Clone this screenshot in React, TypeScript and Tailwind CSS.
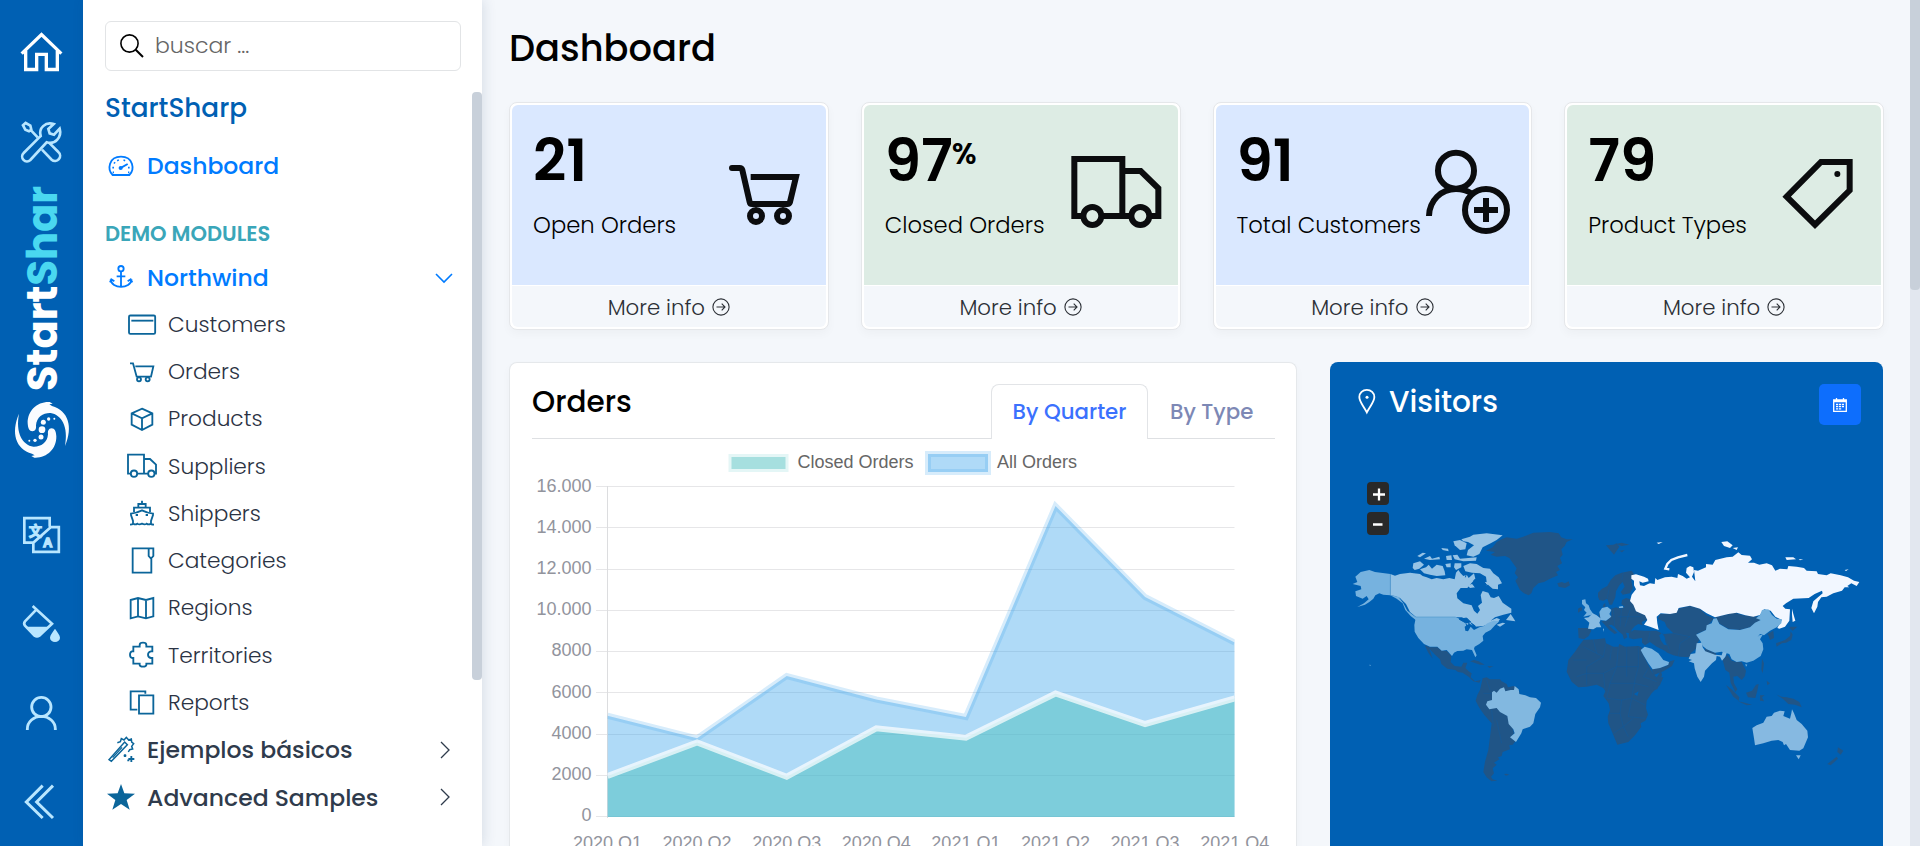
import type { ReactNode } from "react";

const NAV_SUB: { label: string; icon: ReactNode; box: string }[] = [
  {
    label: "Customers",
    box: "378 85 99 96",
    icon: (
      <>
        <rect x="387" y="104.5" width="78.5" height="55" rx="4" />
        <path d="M394 120H460" />
      </>
    ),
  },
  {
    label: "Orders",
    box: "378 227 99 96",
    icon: (
      <>
        <path d="M390 249H399L410 289H453L460 258H406" />
        <circle cx="417" cy="297" r="6" />
        <circle cx="443" cy="297" r="6" />
      </>
    ),
  },
  {
    label: "Products",
    box: "378 369 99 96",
    icon: <path d="M426 386L457 400V434L426 450L395 434V400ZM395 400L426 415L457 400M426 415V450" />,
  },
  {
    label: "Suppliers",
    box: "378 511 99 96",
    icon: (
      <>
        <path d="M393 582H384V525H432V582H412M432 582H444M432 538H450L468 555V582H463" />
        <circle cx="402" cy="582" r="9.5" />
        <circle cx="454" cy="582" r="9.5" />
      </>
    ),
  },
  {
    label: "Shippers",
    box: "378 652 99 96",
    icon: (
      <>
        <path d="M426 660V669M415 681V670H437V681M402 694V681H450V694M399 731V721L393 703V699Q410 697 426 689Q442 697 459 699V703L453 721V731M390 732Q397 732 400 729Q406 733 412 729Q418 733 426 729Q434 733 440 729Q446 733 452 729Q456 732 462 732" />
        <path d="M407 703h7M437 703h7" />
      </>
    ),
  },
  {
    label: "Categories",
    box: "378 794 99 96",
    icon: <path d="M454 836V877H398V804H460V827L453 835L446 827V804" />,
  },
  {
    label: "Regions",
    box: "378 96 99 96",
    icon: <path d="M392 120L414 114L438 120L460 114V169L438 175L414 169L392 175ZM414 114V169M438 120V175" />,
  },
  {
    label: "Territories",
    box: "378 238 99 96",
    icon: (
      <path d="M400 261H419V256Q419 249 429 249Q439 249 439 256V261H457V275H453Q444 277 444 285Q444 293 453 295H457V312H439V316Q438 321 429 321Q420 321 419 316V312H400V295H396Q390 293 390 285Q390 277 396 275H400Z" />
    ),
  },
  {
    label: "Reports",
    box: "378 379 99 96",
    icon: <path d="M412 447H392V392H436V399M417 404H460V459H417Z" />,
  },
];

function MenuIcon({ box, children, className }: { box: string; children: ReactNode; className: string }) {
  return (
    <svg viewBox={box} className={className} fill="none" stroke="currentColor" strokeWidth="5.500">
      {children}
    </svg>
  );
}

const SWIRL =
  "M158 371L149 366C112 364 82 392 83 430C84 446 88 454 97 454C107 453 109 446 108 436C110 410 130 398 152 399C184 404 206 440 195 498C220 440 205 392 156 378L148 373Z";

function Rail() {
  return (
    <nav className="flex w-[83px] shrink-0 flex-col bg-[#0060b3] text-[#b8e6ff]">
      <svg viewBox="0 0 249 300" className="h-[100px] w-[83px] text-white" fill="none" stroke="currentColor" strokeWidth="10">
        <path d="M65 161L124.500 104L184 161M77 152V208.500H110V163H139V208.500H172V152" />
      </svg>
      <svg viewBox="0 300 249 255" className="h-[85px] w-[83px]" fill="none" stroke="currentColor" strokeWidth="8">
        <path d="M117 413L71 459A14.500 14.500 0 0 0 91 480L140 427C166 435 186 411 179 386L162 404L149 400L145 387L161 372C136 364 115 385 122 408Z" />
        <path d="M69 376L77 369L91 377L94 389L87 394L76 389ZM91 389L113 412M147 428L175 456A14.500 14.500 0 0 1 155 479L126 449" />
      </svg>
      <svg viewBox="0 185 83 206" className="h-[206px] w-[83px]">
        <text transform="translate(57 391) rotate(-90)" className="fill-white font-['Poppins','Inter',sans-serif] text-[41.600px] font-bold">
          Start<tspan fill="#4ad8f0">Shar</tspan>
        </text>
      </svg>
      <svg viewBox="0 333 249 237" className="h-[79px] w-[83px]" fill="#fafcff">
        <path d={SWIRL} />
        <path transform="rotate(180 126 449.500)" d={SWIRL} />
        <circle cx="126" cy="449" r="10" />
        <circle cx="130" cy="427" r="7.500" />
        <circle cx="146" cy="417" r="5" />
        <circle cx="163" cy="416" r="3" />
        <circle cx="123" cy="471" r="7.500" />
        <circle cx="105" cy="481" r="5" />
        <circle cx="88" cy="482" r="3" />
      </svg>
      <svg viewBox="0 570 249 330" className="h-[110px] w-[83px]" fill="none" stroke="currentColor" strokeWidth="8">
        <path d="M98 788H73V714.500H149V740M149 741.500H176.500V815.500H100V788L152 741.500" />
        <text x="86" y="768" fill="currentColor" strokeWidth="3" className="font-['Noto_Sans_CJK_SC',sans-serif] text-[40px] font-bold">文</text>
        <text x="129" y="801" fill="currentColor" strokeWidth="4" className="font-['Liberation_Sans',sans-serif] text-[39px] font-bold">A</text>
      </svg>
      <svg viewBox="0 60 249 270" className="h-[90px] w-[83px]" fill="none" stroke="currentColor" strokeWidth="8">
        <path d="M98 138L156 191L118 227Q111 232 104 227L75 197Q70 190 75 184L109 149" />
        <path fill="currentColor" stroke="none" d="M76 200H146L118 229Q111 234 104 229ZM165 206C172 217 180 225 180 233A15 13 0 0 1 150 233C150 225 158 217 165 206Z" />
      </svg>
      <svg viewBox="0 330 249 270" className="h-[90px] w-[83px]" fill="none" stroke="currentColor" strokeWidth="8.500">
        <circle cx="124" cy="441" r="29" />
        <path d="M82 510V507A42 38 0 0 1 166 507V510" />
      </svg>
      <svg viewBox="0 600 249 258" className="h-[86px] w-[83px]" fill="none" stroke="currentColor" strokeWidth="9">
        <path d="M128 677L79 726L128 774M159 677L110 726L159 774" />
      </svg>
    </nav>
  );
}

function Sidebar() {
  return (
    <aside className="relative z-10 flex w-[399px] shrink-0 flex-col bg-white text-[#2f3b4c] shadow-[2px_0_12px_rgba(30,60,100,0.13)]">
      <div className="ml-[22px] mt-[21px] flex h-[50px] w-[356px] shrink-0 items-center rounded-md border border-[#e2e4e6] pl-[14px]">
        <svg viewBox="0 0 24 24" className="size-6 text-black" fill="none" stroke="currentColor" strokeWidth="1.600">
          <circle cx="9.500" cy="9.500" r="8.600" />
          <path d="M15.700 15.700L23 23" strokeWidth="2" />
        </svg>
        <span className="ml-[11px] text-[22px] font-light leading-[48px] text-[#666]">buscar ...</span>
      </div>
      <div className="mt-[21px] flex min-h-0 flex-1">
        <div className="flex-1 pl-[22px]">
          <div className="h-[33px] text-[26.300px] font-medium leading-[32px] text-[#0060b3]">StartSharp</div>
          <div className="mt-[17px] flex h-[47px] items-center text-[23.500px] font-medium text-[#007bff]">
            <MenuIcon box="315 432 108 132" className="h-11 w-9">
              <path d="M338 525H388C405 508 400 470 363 470C326 470 321 508 338 525Z" />
              <path strokeWidth="6" d="M360 505L383 492" />
              <circle cx="362" cy="504" r="3.500" />
              <path d="M337 503h5M384 517h4M338 517h4M342 487l3 3M353 479l2 4M372 483l2-4M384 503h5" />
            </MenuIcon>
            <span className="ml-[6px]">Dashboard</span>
          </div>
          <div className="mt-[30px] h-[30px] text-[21px] font-semibold leading-[30px] text-[#3aa6b9]">DEMO MODULES</div>
          <div className="mt-[5px] flex h-[47px] items-center text-[23.500px] font-medium text-[#007bff]">
            <MenuIcon box="315 768 108 132" className="h-11 w-9">
              <circle cx="363" cy="806" r="8" />
              <path d="M363 814V858M350 829H376M332 838C334 868 392 868 395 838M330 847L334 838L343 844M383 844L392 838L397 847" />
            </MenuIcon>
            <span className="ml-[6px]">Northwind</span>
            <svg viewBox="0 0 20 20" className="ml-auto mr-[18px] size-5" fill="none" stroke="currentColor" strokeWidth="1.600">
              <path d="M2 6L10 14L18 6" />
            </svg>
          </div>
          {NAV_SUB.map((n) => (
            <div key={n.label} className="flex h-[47.250px] items-center pl-[21px] text-[21.700px] font-light">
              <MenuIcon box={n.box} className="h-8 w-[33px] text-[#0b659a]">
                {n.icon}
              </MenuIcon>
              <span className="ml-[9px] mt-px text-[#2b3344]">{n.label}</span>
            </div>
          ))}
          <div className="flex h-[47.250px] items-center text-[23.500px] font-medium">
            <MenuIcon box="315 504 108 132" className="h-11 w-9 text-[#0b659a]">
              <path strokeWidth="4.500" d="M327 599L374 546L382 554L334 604ZM352 548L361 545L364 536L372 540L379 532L386 540L394 537L395 546L401 551L395 559L398 567L389 569L385 576" />
              <path strokeWidth="4" d="M338 593L366 562" />
              <path d="M394 588V606M385 597H403M371 587H379M375 583V591M382 601H388" />
            </MenuIcon>
            <span className="ml-[6px]">Ejemplos básicos</span>
            <svg viewBox="0 0 20 20" className="ml-auto mr-[17px] size-5" fill="none" stroke="currentColor" strokeWidth="1.300">
              <path d="M6 2L14 10L6 18" />
            </svg>
          </div>
          <div className="flex h-[47.250px] items-center text-[23.500px] font-medium">
            <MenuIcon box="315 645 108 132" className="h-11 w-9 text-[#0b659a]">
              <path fill="currentColor" stroke="none" d="M363 672L373 700L405 701L380 720L389 749L363 732L337 749L346 720L321 701L353 700Z" />
            </MenuIcon>
            <span className="ml-[6px]">Advanced Samples</span>
            <svg viewBox="0 0 20 20" className="ml-auto mr-[17px] size-5" fill="none" stroke="currentColor" strokeWidth="1.300">
              <path d="M6 2L14 10L6 18" />
            </svg>
          </div>
        </div>
        <div className="h-[588px] w-[10px] rounded-[4px] bg-[#c8d0da]" />
      </div>
    </aside>
  );
}

const STATS: { value: string; unit?: string; label: string; tone: string; box: string; icon: ReactNode }[] = [
  {
    value: "21",
    label: "Open Orders",
    tone: "bg-[#dae8ff]",
    box: "684 315 324 540",
    icon: (
      <>
        <path d="M782 531H918L900 606Q898 612 892 612H786Q780 612 779 606L757 510Q755 504 749 504H726" />
        <circle cx="726" cy="504" r="9" fill="currentColor" stroke="none" />
        <circle cx="798" cy="648" r="18" />
        <circle cx="879" cy="648" r="18" />
      </>
    ),
  },
  {
    value: "97",
    unit: "%",
    label: "Closed Orders",
    tone: "bg-[#ddece4]",
    box: "330 75 324 540",
    icon: (
      <>
        <path d="M370 408H343V237H487V408H424M487 408H514M487 273H542L595 325V408H569" />
        <circle cx="397" cy="408" r="27" />
        <circle cx="541" cy="408" r="27" />
      </>
    ),
  },
  {
    value: "91",
    label: "Total Customers",
    tone: "bg-[#dae8ff]",
    box: "-27 75 324 540",
    icon: (
      <>
        <circle cx="78" cy="272" r="54" />
        <path d="M-3 408C-2 362 33 327 78 327C96 327 112 332 126 341" />
        <circle cx="168" cy="390" r="63" />
        <path d="M168 354V426M132 390H204" />
      </>
    ),
  },
  {
    value: "79",
    label: "Product Types",
    tone: "bg-[#ddece4]",
    box: "1029 75 324 540",
    icon: (
      <>
        <path d="M1070 350L1173 246H1259V331L1155 434Z" />
        <circle cx="1222" cy="282" r="9" fill="currentColor" stroke="none" />
      </>
    ),
  },
];

function StatCards() {
  return (
    <div className="grid grid-cols-4 gap-8">
      {STATS.map((s) => (
        <div key={s.label} className="flex h-[228px] flex-col rounded-lg border border-[#e5e7ea] bg-white p-[2px] shadow-[0_4px_10px_rgba(0,0,0,0.03)]">
          <div className={`flex h-[180px] rounded-t-md ${s.tone}`}>
            <div className="w-[204px] shrink-0 pl-[21px] pt-[27px] text-black">
              <div className="flex h-[58px] items-start text-[58px] font-semibold leading-[58px]">
                {s.value}
                {s.unit && <span className="-ml-px mt-[4px] text-[30px] font-semibold leading-[36px]">{s.unit}</span>}
              </div>
              <div className="mt-[18px] whitespace-nowrap text-[22.700px] font-light leading-[34px]">{s.label}</div>
            </div>
            <svg viewBox={s.box} className="ml-auto h-[180px] w-[108px] shrink-0 text-[#0b0c0e]" fill="none" stroke="currentColor" strokeWidth="18">
              {s.icon}
            </svg>
          </div>
          <div className="mt-px flex flex-1 items-center justify-center rounded-b-md bg-[#f4f7fb] text-[21.300px] font-light text-[#2c3036]">
            <span className="mt-[2px]">More info</span>
            <svg viewBox="0 0 18 18" className="ml-[7px] mt-px size-[18px]" fill="none" stroke="currentColor" strokeWidth="1.100">
              <circle cx="9" cy="9" r="8.100" />
              <path d="M4.500 9H13M9.700 5.700L13 9L9.700 12.300" />
            </svg>
          </div>
        </div>
      ))}
    </div>
  );
}

const X0 = 607.5;
const STEP = 89.6;
const ALL = [715.7, 738.3, 676, 699.5, 717, 506, 597, 642.6];
const CLOSED = [776, 742.5, 776.7, 728.3, 737.7, 693.5, 724, 698.5];
const line = (v: number[]) => v.map((y, i) => `${X0 + i * STEP},${y}`).join(" ");
const area = (v: number[]) => `${line(v)} ${X0 + 7 * STEP},817 ${X0},817`;
const Y_LABELS = ["16.000", "14.000", "12.000", "10.000", "8000", "6000", "4000", "2000", "0"];
const X_LABELS = ["2020 Q1", "2020 Q2", "2020 Q3", "2020 Q4", "2021 Q1", "2021 Q2", "2021 Q3", "2021 Q4"];

function OrdersCard() {
  return (
    <section className="w-[788px] shrink-0 rounded-t-lg border border-b-0 border-[#e5e8eb] bg-white pl-[22px] pr-[21px] shadow-[0_4px_10px_rgba(0,0,0,0.03)]">
      <div className="flex h-[76px] items-end border-b border-[#dee0e3]">
        <h2 className="mb-[18px] text-[29.500px] font-medium leading-[36px] text-black">Orders</h2>
        <div className="-mb-px ml-auto flex h-[55px] w-[157px] items-center justify-center rounded-t-lg border border-b-0 border-[#e2e4e7] bg-white text-[21.300px] font-medium text-[#3b71fe]">
          By Quarter
        </div>
        <div className="flex h-[53px] w-[127px] items-center pl-[22px] text-[21.300px] font-medium text-[#7d88b5]">By Type</div>
      </div>
      <svg viewBox="532 439 744 407" className="h-[407px] w-[744px] font-['Liberation_Sans',Arial,sans-serif] text-[18px]">
        <defs>
          <clipPath id="plot">
            <rect x={X0} y="486" width={7 * STEP} height="332" />
          </clipPath>
        </defs>
        <rect x="728.5" y="454" width="60" height="18" fill="#a6dfdf" />
        <rect x="728.5" y="454" width="60" height="18" fill="none" stroke="rgba(255,255,255,.7)" strokeWidth="6" />
        <text x="797.500" y="467.500" fill="#666" textLength="116">Closed Orders</text>
        <rect x="928" y="454" width="60" height="18" fill="rgba(54,162,235,.4)" stroke="rgba(54,162,235,.2)" strokeWidth="6" />
        <text x="997" y="467.500" fill="#666" textLength="80">All Orders</text>
        {Y_LABELS.map((t, i) => (
          <g key={t}>
            <path d={`M596 ${487 + Math.round(i * 41.25) - 0.5}H1234.500`} stroke="#e6e6e8" />
            <text x="591.500" y={492 + i * 41.1} textAnchor="end" fill="#92949d">
              {t}
            </text>
          </g>
        ))}
        <path d="M607.500 486V818" stroke="#dcdddf" />
        <g clipPath="url(#plot)">
          <polygon points={area(ALL)} fill="rgba(54,162,235,.4)" />
          <polyline points={line(ALL)} fill="none" stroke="rgba(54,162,235,.2)" strokeWidth="6" />
          <polygon points={area(CLOSED)} fill="rgba(75,192,192,.5)" />
          <polyline points={line(CLOSED)} fill="none" stroke="rgba(255,255,255,.7)" strokeWidth="6" />
        </g>
        {X_LABELS.map((t, i) => (
          <text key={t} x={X0 + i * STEP} y="849" textAnchor="middle" fill="#92949d">
            {t}
          </text>
        ))}
      </svg>
    </section>
  );
}

const DARK = [
  "498,272 518,262 530,246 545,238 560,232 590,236 610,230 640,218 690,216 716,220 724,232 740,238 758,238 740,246 734,258 724,268 728,284 720,294 726,310 712,318 720,330 708,336 714,346 690,356 672,366 655,370 640,384 634,400 626,406 612,400 600,390 592,374 586,362 594,352 584,340 590,325 578,308 568,294 555,288 530,290 512,284 525,276",
  "712,370 725,366 735,370 746,364 750,376 735,384 716,380",
  "858,256 880,254 890,250 898,260 882,284 868,268",
  "888,252 905,248 928,254 905,258",
  "898,272 914,270 906,277",
  "314,556 330,562 352,562 366,572 380,572 394,588 392,606 404,618 424,620 430,608 442,608 436,624 446,634 455,640 452,652 465,664 482,660 478,668 460,664 446,650 428,638 414,636 406,630 382,626 364,612 360,598 345,584 328,566 338,596 325,578",
  "450,604 462,600 476,604 494,614 480,614",
  "502,618 520,619 508,624",
  "488,655 500,652 510,658 540,658 545,664 560,672 564,682 580,678 590,682 600,700 560,720 540,750 562,768 574,790 582,820 572,832 586,844 578,854 568,856 570,868 548,876 545,888 534,892 538,898 522,908 530,914 518,925 522,940 513,950 518,958 532,962 514,964 500,952 490,936 495,905 505,870 510,830 515,790 493,765 477,742 467,722 472,705 480,690 484,672",
  "552,942 560,941 568,944 558,947",
  "774,446 784,440 787,450 774,458",
  "774,504 808,504 814,512 806,528 792,538 776,534",
  "834,410 834,398 846,386 862,378 872,360 886,346 905,338 935,332 942,342 934,362 938,384 930,400 908,404 902,396 914,380 908,366 898,376 888,394 886,412 876,434 868,434 862,416 850,422 838,420",
  "850,434 856,428 856,440 848,442",
  "836,468 840,456 846,476",
  "874,446 888,442 902,446 914,440 904,432 906,420 918,414 932,418 945,438 975,463 982,478 965,486 968,496 955,492 945,498 936,508 932,520 918,518 922,532 912,538 908,524 894,512 884,500 874,494 866,496 892,518 884,522 868,510 852,492 844,484 860,482 874,468",
  "926,520 942,510 972,512 1010,512 1030,522 1060,520 1040,500 1034,486 1014,476 1020,462 1050,462 1070,456 1076,446 1110,437 1140,446 1160,466 1182,475 1165,495 1158,510 1130,522 1140,536 1132,550 1128,566 1112,580 1110,592 1080,590 1060,586 1042,578 1034,572 1010,560 990,546 975,556 966,548 966,534 940,538 928,534",
  "995,628 1040,618 1050,604 1064,600 1056,618 1030,634 1000,646",
  "1155,565 1188,580 1188,588 1155,578",
  "1185,472 1225,462 1230,455 1250,460 1270,466 1300,468 1318,472 1320,482 1302,492 1290,502 1260,510 1225,506 1200,492",
  "775,560 790,540 830,538 855,535 858,550 880,560 895,560 898,552 915,560 955,558 965,562 968,580 985,615 1000,642 1012,654 1030,652 1020,675 995,700 980,722 978,745 984,764 976,782 962,790 964,800 945,826 925,846 892,854 880,825 865,790 863,770 870,750 866,730 850,708 856,694 850,684 830,674 800,680 775,682 755,665 740,635 745,600 765,575",
  "1023,632 1026,645 1012,688 1002,690 998,674 1006,658",
  "1154,542 1159,550 1155,555",
  "1208,600 1222,584 1235,602 1250,606 1265,606 1278,632 1275,648 1265,660 1252,648 1240,650 1242,670 1252,688 1246,696 1232,668 1228,638 1216,630",
  "1218,675 1235,688 1258,712 1256,722 1240,710",
  "1254,724 1275,728 1296,734 1280,736",
  "1278,698 1296,692 1308,674 1316,672 1312,692 1306,714 1284,712",
  "1320,706 1334,706 1326,712 1332,724 1320,722",
  "1326,596 1332,610 1328,640 1324,630",
  "1340,662 1350,670 1342,676",
  "1370,704 1385,710 1400,712 1420,716 1438,726 1445,742 1425,734 1405,732 1390,718",
  "1412,500 1432,500 1418,512 1408,504",
  "1412,514 1418,524 1414,540 1398,548 1386,550 1370,560 1368,550 1395,540 1410,528",
  "1342,522 1360,512 1362,534 1350,540 1346,528",
  "1554,862 1570,872 1562,884 1552,876",
  "1550,890 1554,896 1532,916 1522,912",
];
const LIGHT: [string, string[]][] = [
  [
    "#96c3e5",
    [
      "211,342 225,347 240,342 270,338 300,342 308,348 320,352 335,358 350,354 370,358 388,354 404,358 408,338 415,330 422,340 430,348 440,344 446,354 462,340 466,356 452,372 442,384 422,384 410,400 412,415 430,430 455,436 462,452 472,461 480,450 474,438 486,428 482,405 488,393 505,398 512,412 522,414 536,408 548,428 562,438 574,446 574,458 550,464 525,472 512,482 530,474 540,478 532,488 515,490 490,498 462,500 448,490 440,478 425,472 288,471 270,456 258,432 240,414 225,408 211,406",
      "400,244 420,240 440,250 436,268 420,270 404,256",
      "424,238 450,230 460,224 500,220 548,226 530,240 512,250 488,262 478,282 460,290 440,286 444,270 462,256 444,246 430,244",
      "280,310 300,304 312,314 298,326 284,330 278,324",
      "300,328 318,322 326,314 336,326 350,314 368,318 374,334 376,346 350,348 330,344 312,340",
      "292,288 308,278 318,280 300,292",
      "312,296 330,288 336,296 358,290 360,298 330,300",
      "364,264 384,266 386,274 368,270",
      "378,288 394,286 396,300 380,300",
      "376,312 392,310 392,322 380,322",
      "404,310 424,310 424,322 408,330 402,322",
      "398,286 412,284 420,296 470,292 468,302 430,304 404,298",
      "430,318 450,310 470,312 490,324 510,326 520,340 536,352 546,370 534,374 534,388 518,386 504,374 486,380 482,370 500,366 498,350 480,340 456,338 436,334",
      "442,376 456,372 466,382 450,384",
      "558,480 572,462 580,474 586,484 574,482",
      "530,494 548,488 556,490 540,500",
    ],
  ],
  [
    "#76b2df",
    [
      "98,372 112,366 106,350 122,336 148,330 165,336 211,342 211,406 190,404 178,400 166,406 160,416 148,426 135,434 112,441 132,430 146,418 140,408 128,416 108,408 106,394 124,388 122,378",
      "211,406 235,410 250,430 262,452 288,472 290,482 272,468 256,450 248,430 230,416",
      "288,471 407,471 425,480 438,484 446,492 434,500 436,512 444,514 452,500 462,510 478,502 492,498 502,490 520,482 538,484 525,496 512,510 496,518 488,528 490,542 478,552 464,560 462,566 470,586 466,592 456,570 440,568 430,572 412,573 402,578 396,588 380,570 365,572 352,560 330,560 312,552 295,534 284,515 283,495 286,480",
      "148,614 153,615 150,618",
      "786,420 796,418 798,430 806,436 810,448 820,462 810,466 790,470 800,458 792,450 796,442 786,432",
      "838,456 846,444 862,440 874,450 868,462 874,470 858,482 842,480",
      "962,570 974,560 995,566 1015,580 1030,600 1047,606 1045,614 1020,624 998,628 985,610 970,585",
    ],
  ],
  [
    "#88bbe2",
    [
      "792,474 806,472 818,460 830,466 843,476 838,488 844,502 830,502 820,508 804,506 808,488",
      "849,506 852,506 851,516",
      "896,440 908,438 910,443 898,444",
      "1106,596 1112,582 1126,580 1130,550 1146,548 1148,562 1156,574 1185,584 1205,586 1208,576 1222,574 1216,590 1206,602 1200,590 1190,588 1188,600 1176,610 1155,632 1152,650 1142,666 1132,650 1124,625 1122,610 1106,604 1116,600",
    ],
  ],
  [
    "#82b8e0",
    [
      "516,697 522,692 530,698 540,686 552,682 556,694 572,690 582,690 584,678 596,688 598,702 616,706 630,712 648,714 663,728 660,742 646,762 640,790 630,800 608,808 604,820 588,846 570,832 584,820 580,808 566,792 562,768 540,756 530,744 508,748 498,734 502,724 516,720",
    ],
  ],
  [
    "#f2f7ff",
    [
      "934,346 948,343 972,350 984,356 986,364 968,368 958,364 960,376 972,378 984,372 990,370 1004,372 1006,354 1012,360 1035,352 1055,350 1072,354 1074,342 1088,348 1100,356 1110,352 1098,338 1100,324 1110,318 1120,322 1122,336 1116,350 1126,364 1122,330 1134,332 1158,322 1158,312 1178,314 1186,300 1220,292 1238,290 1255,277 1265,285 1290,287 1296,298 1284,308 1302,308 1318,314 1340,310 1356,316 1366,332 1380,326 1402,328 1405,318 1430,320 1452,324 1460,332 1490,334 1494,342 1520,346 1532,340 1562,346 1584,352 1602,362 1618,366 1610,378 1594,370 1582,378 1588,382 1574,382 1566,392 1540,400 1520,410 1504,412 1494,426 1492,440 1482,460 1474,444 1480,424 1508,400 1506,392 1484,402 1466,414 1420,416 1398,430 1388,438 1396,446 1410,448 1408,482 1395,500 1378,506 1372,504 1385,480 1366,470 1352,452 1332,448 1320,465 1300,470 1276,466 1250,458 1225,462 1185,472 1160,460 1140,446 1110,437 1076,444 1070,458 1050,462 1022,460 1010,470 1012,490 1016,510 990,500 972,494 982,480 975,466 948,454 940,434 930,423 935,404 948,388 942,376 942,362 934,356",
      "1204,246 1222,244 1238,256 1230,264 1212,258",
      "1238,264 1254,262 1250,270",
      "1010,248 1028,246 1016,252",
      "1396,292 1420,292 1428,298 1400,300",
      "1436,298 1450,298 1440,301",
      "1574,330 1586,328 1578,333",
      "1416,446 1420,462 1426,482 1418,486 1416,464",
    ],
  ],
  [
    "#72b0dd",
    [
      "1128,524 1158,510 1160,496 1175,490 1180,476 1190,475 1198,492 1225,508 1260,510 1290,502 1305,488 1322,480 1308,475 1320,465 1326,450 1345,448 1356,465 1370,476 1386,478 1384,490 1370,502 1350,512 1332,526 1320,522 1312,532 1318,526 1328,524 1320,538 1328,550 1330,568 1322,588 1300,602 1280,608 1265,604 1250,606 1235,598 1228,582 1205,575 1185,578 1160,568 1148,558 1142,544",
      "1276,612 1282,614 1278,620",
    ],
  ],
  [
    "#86b9e1",
    [
      "1297,804 1310,796 1330,788 1340,770 1355,768 1362,758 1380,752 1394,754 1390,768 1410,776 1414,760 1416,748 1422,760 1430,780 1445,792 1462,812 1464,832 1450,865 1438,872 1410,870 1398,852 1392,856 1388,846 1375,840 1355,842 1330,850 1305,856 1302,835",
      "1428,886 1442,886 1436,898",
    ],
  ],
];
const BORDERS =
  "M790 560L850 590M858 550L850 590L800 620M895 560L890 620L850 640M955 620H890M955 560V620L945 660M890 620L870 670H945L985 680M800 620V675M760 600H800M770 650L800 640L850 640L855 690M870 670L860 715L905 720L900 760H870M945 660L935 715L975 735M905 720L935 715L925 770L975 775M900 760L910 800L940 775M880 820L910 800L925 830M985 625L970 650L1010 665M820 540L830 580M875 560L870 600M920 560V650M990 515L985 545M1030 522L1050 575M1060 520L1110 530M1075 590L1080 550L1110 530M880 445L884 500M905 440L900 500M930 450L915 500M895 470H960M868 380L862 415M910 340L905 360M515 750L520 800M530 780L545 850M490 700L515 700M500 660L510 690";

function VisitorsCard() {
  return (
    <section className="mr-px w-[553px] shrink-0 rounded-t-lg bg-[#0060b3] text-white">
      <div className="flex h-[98px] items-start pl-[27px] pr-[22px] pt-[22px]">
        <svg viewBox="80 78 60 84" className="mt-[4px] h-[28px] w-5" fill="none" stroke="currentColor" strokeWidth="5.500">
          <path d="M109.500 151C100 132 87 120 87 105A22.500 21.500 0 0 1 132 105C132 120 119 132 109.500 151Z" />
          <circle cx="110" cy="106" r="4.500" fill="currentColor" stroke="none" />
        </svg>
        <h2 className="ml-[12px] text-[29.600px] font-medium leading-[36px]">Visitors</h2>
        <div className="ml-auto flex h-[41px] w-[42px] items-center justify-center rounded-[5px] bg-[#0d6efd]">
          <svg viewBox="0 0 14 14" className="size-[14px]" fill="none" stroke="currentColor" strokeWidth="1.300">
            <path d="M.700 2H13.300V13.300H.700ZM.700 3.500H13.300M3.500 0V3M10.500 0V3" />
            <path d="M3 6.500H11M3 8.700H11M3 10.900H9" strokeDasharray="2.200 .8" />
          </svg>
        </div>
      </div>
      <div className="relative">
        <svg viewBox="30 0 1659 1158" className="h-[386px] w-[553px]">
          <g fill="#205587">
            {DARK.map((p) => (
              <polygon key={p} points={p} />
            ))}
          </g>
          <path d={BORDERS} fill="none" stroke="#0060b3" strokeWidth="1.500" opacity=".55" />
          <path d="M1026 518L1034 532L1036 545L1041 556L1032 554L1022 540L1018 526Z" fill="#0060b3" />
          <path d="M942 702L956 694L952 708Z" fill="#0060b3" />
          {LIGHT.map(([fill, polys]) => (
            <g key={fill} fill={fill}>
              {polys.map((p) => (
                <polygon key={p} points={p} />
              ))}
            </g>
          ))}
          <path d="M1048 328L1036 326L1042 312L1054 300L1074 292L1102 285" fill="none" stroke="#f2f7ff" strokeWidth="7" />
          <path d="M211 342V406M288 471H407" stroke="#4b93cb" strokeWidth="1.800" />
          <path d="M418 478L440 474L452 486L436 488ZM438 490L444 510M452 488L466 498L462 506M440 340L436 352M462 360L484 358L500 374L486 390L470 388L462 376Z" fill="#0060b3" stroke="#0060b3" strokeWidth="3" />
        </svg>
        <div className="absolute left-[37px] top-[22px] flex flex-col gap-[7px]">
          {["M6 12.500H18M12 6.500V18.500", "M6 12.500H15.500"].map((d) => (
            <svg key={d} viewBox="0 0 22 23" className="h-[23px] w-[22px] rounded-[4px] bg-[#292929]" stroke="white" strokeWidth="2.300">
              <path d={d} />
            </svg>
          ))}
        </div>
      </div>
    </section>
  );
}

export default function App() {
  return (
    <div className="flex h-[846px] w-full overflow-hidden bg-[#f4f7fb] font-['Poppins','Inter',sans-serif]">
      <Rail />
      <Sidebar />
      <main className="flex min-w-0 flex-1 flex-col pl-[27px] pr-[26px]">
        <h1 className="mt-[24px] text-[36.800px] font-medium leading-[48px] text-black">Dashboard</h1>
        <div className="mt-[30px]">
          <StatCards />
        </div>
        <div className="mt-[32px] flex min-h-0 flex-1 justify-between">
          <OrdersCard />
          <VisitorsCard />
        </div>
      </main>
      <div className="w-[10px] shrink-0 bg-[#e2e7ef]">
        <div className="h-[290px] rounded-b-[4px] bg-[#c8d0da]" />
      </div>
    </div>
  );
}
